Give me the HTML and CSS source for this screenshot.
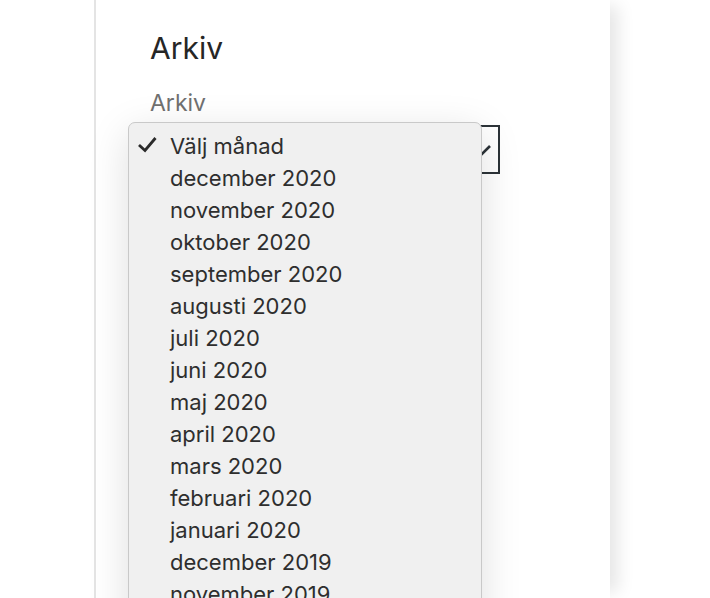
FILE: index.html
```html
<!DOCTYPE html>
<html lang="sv">
<head>
<meta charset="utf-8">
<title>Arkiv</title>
<link rel="stylesheet" href="styles.css">
</head>
<body>
<div class="page">
  <section class="card">
    <h2 class="widget-title">Arkiv</h2>
    <label class="field-label">Arkiv</label>
    <div class="select-wrap">
      <div class="select">
        <svg class="chevron" width="20" height="14" viewBox="0 0 20 14"><polyline points="2,3 10,11 18,3" fill="none" stroke="#2c3338" stroke-width="2.6"/></svg>
      </div>
      <ul class="menu">
        <li class="selected"><svg class="check" width="20" height="18" viewBox="0 0 20 18"><polyline points="2,10 8,15.5 18.5,3" fill="none" stroke="#2b2b2b" stroke-width="2.8"/></svg>Välj månad</li>
        <li>december 2020</li>
        <li>november 2020</li>
        <li>oktober 2020</li>
        <li>september 2020</li>
        <li>augusti 2020</li>
        <li>juli 2020</li>
        <li>juni 2020</li>
        <li>maj 2020</li>
        <li>april 2020</li>
        <li>mars 2020</li>
        <li>februari 2020</li>
        <li>januari 2020</li>
        <li>december 2019</li>
        <li>november 2019</li>
        <li>oktober 2019</li>
      </ul>
    </div>
  </section>
</div>
</body>
</html>
```
FILE: styles.css
```css
html, body {
  margin: 0;
  padding: 0;
  background: #ffffff;
  overflow: hidden;
}
body {
  font-family: Inter, "Noto Sans", sans-serif;
  color: #2b2b2b;
}
.page {
  height: 598px;
  overflow: hidden;
}
.card {
  margin-left: 94px;
  width: 516px;
  height: 598px;
  box-sizing: border-box;
  border-left: 2px solid #e4e4e4;
  box-shadow: 14px 0 16px -6px rgba(0, 0, 0, 0.1);
  background: #fff;
  padding: 28px 0 0 54px;
}
.widget-title {
  margin: 0;
  font-size: 30px;
  font-weight: 400;
  line-height: 40px;
  color: #262626;
}
.field-label {
  display: block;
  margin-top: 20px;
  font-size: 23px;
  line-height: 30px;
  color: #707070;
}
.select-wrap {
  position: relative;
  margin-top: 7px;
}
.select {
  width: 350px;
  height: 49px;
  box-sizing: border-box;
  border: 2px solid #2c3338;
  display: flex;
  justify-content: flex-end;
  align-items: center;
  padding-right: 6px;
}
.chevron {
  display: block;
}
.menu {
  position: absolute;
  left: -22px;
  top: -3px;
  width: 354px;
  height: 600px;
  box-sizing: border-box;
  margin: 0;
  padding: 7px 0 0 0;
  list-style: none;
  background: #f0f0f0;
  border: 1px solid #c9c9c9;
  border-radius: 7px;
  box-shadow: 0 10px 40px rgba(0, 0, 0, 0.13);
  overflow: hidden;
}
.menu li {
  position: relative;
  padding-left: 41px;
  font-size: 22px;
  line-height: 32px;
  color: #2e2e2e;
  white-space: nowrap;
}
.check {
  position: absolute;
  left: 8px;
  top: 5px;
}
```
